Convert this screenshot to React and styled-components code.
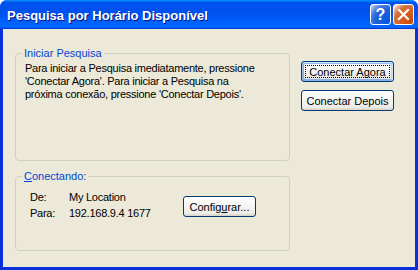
import React from 'react';
import styled, { createGlobalStyle } from 'styled-components';

const Global = createGlobalStyle`
  html, body { margin: 0; padding: 0; background: #fff; }
  body { font-family: "Liberation Sans", Arial, sans-serif; font-size: 11px; }
`;

const Window = styled.div`
  width: 418px;
  height: 270px;
  display: flex;
  flex-direction: column;
  border-radius: 7px 7px 0 0;
  overflow: hidden;
  background: #0054e3;
`;

const TitleBar = styled.div`
  height: 29px;
  flex: none;
  display: flex;
  align-items: center;
  padding: 0 4px 0 7px;
  background: linear-gradient(180deg, #0997ff, #0053ee 8%, #0050ee 40%, #06f 88%, #06f 93%, #005bff 95%, #003dd7 96%, #003dd7);
`;

const Title = styled.div`
  flex: 1;
  color: #fff;
  font-weight: bold;
  font-size: 13px;
  text-shadow: 1px 1px #0f1089;
  margin-top: 1px;
`;

const Caption = styled.button`
  width: 21px;
  height: 21px;
  margin-left: 2px;
  padding: 0;
  border: 1px solid #fff;
  border-radius: 3px;
  display: flex;
  align-items: center;
  justify-content: center;
  color: #fff;
  font: bold 16px "Liberation Sans", Arial, sans-serif;
  background: ${p => p.$close
    ? 'radial-gradient(circle at 90% 90%, #cc4600 0%, #dc6527 55%, #cd7546 70%, #ffccb2 90%, #fff 100%)'
    : 'radial-gradient(circle at 90% 90%, #0054e9 0%, #2263d5 55%, #4479e4 70%, #a3bbec 90%, #fff 100%)'};
`;

const Frame = styled.div`
  flex: 1;
  display: flex;
  padding: 0 3px 3px;
  background: #0831d9;
`;

const Body = styled.div`
  flex: 1;
  display: flex;
  align-items: flex-start;
  background: #ece9d8;
  padding: 18px 0 0 12px;
`;

const Left = styled.div`
  width: 275px;
  display: flex;
  flex-direction: column;
  gap: 9px;
`;

const Group = styled.fieldset`
  margin: 0;
  box-sizing: border-box;
  height: ${p => p.$h}px;
  border: 1px solid #d0d0bf;
  border-radius: 4px;
  padding: 0;
  min-width: 0;
`;

const Legend = styled.legend`
  margin-left: 6px;
  padding: 0 2px;
  color: #0046d5;
  line-height: 13px;
`;

const Content = styled.div`
  padding: ${p => p.$pad};
  letter-spacing: -0.25px;
`;

const Text = styled.p`
  margin: 0;
  line-height: 13px;
  color: #000;
`;

const ConnRow = styled.div`
  display: flex;
  align-items: flex-start;
`;

const Info = styled.div`
  width: 153px;
  display: grid;
  grid-template-columns: 39px 1fr;
  grid-auto-rows: 16px;
  line-height: 16px;
`;

const Right = styled.div`
  margin-left: 11px;
  margin-top: 14px;
  display: flex;
  flex-direction: column;
  gap: 8px;
`;

const Button = styled.button`
  position: relative;
  width: ${p => p.$w}px;
  height: 21px;
  padding: 0;
  margin-top: ${p => p.$mt || 0}px;
  border: 1px solid #003c74;
  border-radius: 3px;
  font: 11px "Liberation Sans", Arial, sans-serif;
  letter-spacing: 0;
  color: #000;
  background: linear-gradient(180deg, #fff, #ecebe6 86%, #d6d0c5);
  box-shadow: ${p => p.$def
    ? 'inset -1px 1px #cee7ff, inset 1px 2px #98b8ea, inset -2px 2px #bcd4f6, inset 1px -1px #89ade4, inset 2px -2px #89ade4'
    : 'none'};
  &::after {
    content: '';
    display: ${p => (p.$def ? 'block' : 'none')};
    position: absolute;
    inset: 3px;
    border: 1px dotted #000;
  }
`;

const Help = () => (
  <Caption aria-label="Ajuda">?</Caption>
);

const Close = () => (
  <Caption $close aria-label="Fechar">
    <svg width="13" height="13" viewBox="0 0 13 13">
      <path d="M2 2 L11 11 M11 2 L2 11" stroke="#fff" strokeWidth="2.2" strokeLinecap="square" />
    </svg>
  </Caption>
);

export default function App() {
  return (
    <>
      <Global />
      <Window>
        <TitleBar>
          <Title>Pesquisa por Horário Disponível</Title>
          <Help />
          <Close />
        </TitleBar>
        <Frame>
          <Body>
            <Left>
              <Group $h={114}>
                <Legend>Iniciar Pesquisa</Legend>
                <Content $pad="2px 8px 0 9px">
                  <Text>
                    Para iniciar a Pesquisa imediatamente, pressione<br />
                    'Conectar Agora'. Para iniciar a Pesquisa na<br />
                    próxima conexão, pressione 'Conectar Depois'.
                  </Text>
                </Content>
              </Group>
              <Group $h={81}>
                <Legend><u>C</u>onectando:</Legend>
                <Content $pad="6px 8px 0 14px">
                  <ConnRow>
                    <Info>
                      <span>De:</span><span>My Location</span>
                      <span>Para:</span><span>192.168.9.4 1677</span>
                    </Info>
                    <Button $w={73} $mt={7}>Config<u>u</u>rar...</Button>
                  </ConnRow>
                </Content>
              </Group>
            </Left>
            <Right>
              <Button $w={93} $def>Conectar Agora</Button>
              <Button $w={93}>Conectar Depois</Button>
            </Right>
          </Body>
        </Frame>
      </Window>
    </>
  );
}
